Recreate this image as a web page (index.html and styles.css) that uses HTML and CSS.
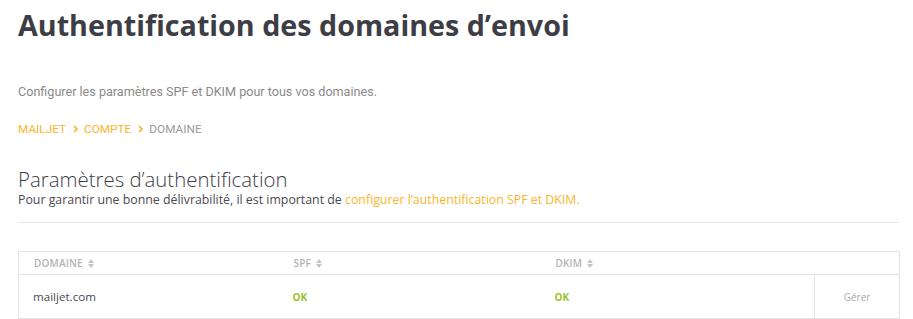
FILE: index.html
```html
<!DOCTYPE html>
<html lang="fr">
<head>
<meta charset="utf-8">
<link rel="stylesheet" href="styles.css">
</head>
<body>
<div class="page">
  <h1 class="title">Authentification des domaines d’envoi</h1>
  <p class="intro">Configurer les paramètres SPF et DKIM pour tous vos domaines.</p>
  <nav class="crumbs">
    <a class="crumb link">MAILJET</a>
    <svg class="sep" width="5" height="8" viewBox="0 0 5 8"><path d="M1 1 L4 4 L1 7" fill="none" stroke="#fbb52b" stroke-width="1.6"/></svg>
    <a class="crumb link">COMPTE</a>
    <svg class="sep" width="5" height="8" viewBox="0 0 5 8"><path d="M1 1 L4 4 L1 7" fill="none" stroke="#fbb52b" stroke-width="1.6"/></svg>
    <span class="crumb current">DOMAINE</span>
  </nav>
  <h2 class="section">Paramètres d’authentification</h2>
  <p class="sub">Pour garantir une bonne délivrabilité, il est important de <a class="sublink">configurer l’authentification SPF et DKIM.</a></p>
  <hr class="rule">
  <table class="grid">
    <thead>
      <tr>
        <th class="c1">DOMAINE <svg class="sort" width="6" height="9" viewBox="0 0 6 9"><path d="M3 0 L6 4 L0 4 Z M0 5 L6 5 L3 9 Z" fill="#c4c4c4"/></svg></th>
        <th class="c2">SPF <svg class="sort" width="6" height="9" viewBox="0 0 6 9"><path d="M3 0 L6 4 L0 4 Z M0 5 L6 5 L3 9 Z" fill="#c4c4c4"/></svg></th>
        <th class="c3">DKIM <svg class="sort" width="6" height="9" viewBox="0 0 6 9"><path d="M3 0 L6 4 L0 4 Z M0 5 L6 5 L3 9 Z" fill="#c4c4c4"/></svg></th>
        <th class="c4"></th>
      </tr>
    </thead>
    <tbody>
      <tr>
        <td class="c1 dom">mailjet.com</td>
        <td class="c2 ok">OK</td>
        <td class="c3 ok">OK</td>
        <td class="c4 manage">Gérer</td>
      </tr>
    </tbody>
  </table>
</div>
</body>
</html>
```
FILE: styles.css
```css
html, body { margin: 0; padding: 0; background: #fff; }
.page { padding: 0 14px 0 18px; }
.title {
  font-family: "Open Sans", sans-serif;
  font-weight: 700;
  font-size: 28.7px;
  color: #3d3d45;
  margin: 0;
  padding-top: 5px;
  line-height: 40px;
}
.intro {
  font-family: Roboto, sans-serif;
  font-size: 12.6px;
  color: #8a8a8a;
  margin: 39px 0 0;
  line-height: 16px;
}
.crumbs {
  display: flex;
  align-items: center;
  gap: 6.5px;
  margin-top: 21px;
  font-family: Roboto, sans-serif;
  font-size: 11.8px;
  line-height: 16px;
}
.crumb.link { color: #fbb52b; }
.crumb.current { color: #9a9a9a; }
.sep { display: block; margin-bottom: 1px; }
.section {
  font-family: "Open Sans", sans-serif;
  font-weight: 300;
  font-size: 20.4px;
  color: #3d3d45;
  margin: 30px 0 0;
  line-height: 25px;
}
.sub {
  font-family: "Open Sans", sans-serif;
  font-size: 12.35px;
  color: #4a4a52;
  margin: 0;
  line-height: 16px;
}
.sublink { color: #fbb52b; }
.rule { border: 0; border-top: 1px solid #e3e3e3; margin: 14px 0 0; }
.grid {
  margin-top: 28px;
  width: 100%;
  border-collapse: collapse;
  border: 1px solid #e3e3e3;
  font-family: "Open Sans", sans-serif;
  table-layout: fixed;
}
.grid th, .grid td { box-sizing: border-box; }
.grid th {
  text-align: left;
  font-size: 10px;
  font-weight: 600;
  color: #b3b3b3;
  letter-spacing: 0.2px;
  height: 23px;
  padding: 0 0 0 15px;
  border-bottom: 1px solid #e3e3e3;
}
.sort { vertical-align: -1px; margin-left: 2px; }
.c1 { width: 260px; }
.c2 { width: 262px; }
.c3 { width: 274px; }
.c4 { width: 85px; }
.grid td { height: 44px; padding: 0 0 0 14px; }
.dom { font-size: 11.6px; color: #4a4a52; }
.ok { font-size: 10px; font-weight: 700; color: #9ac22a; }
.grid td.manage { text-align: center; padding: 0; font-size: 10px; color: #aaa; border-left: 1px solid #e3e3e3; }
```
